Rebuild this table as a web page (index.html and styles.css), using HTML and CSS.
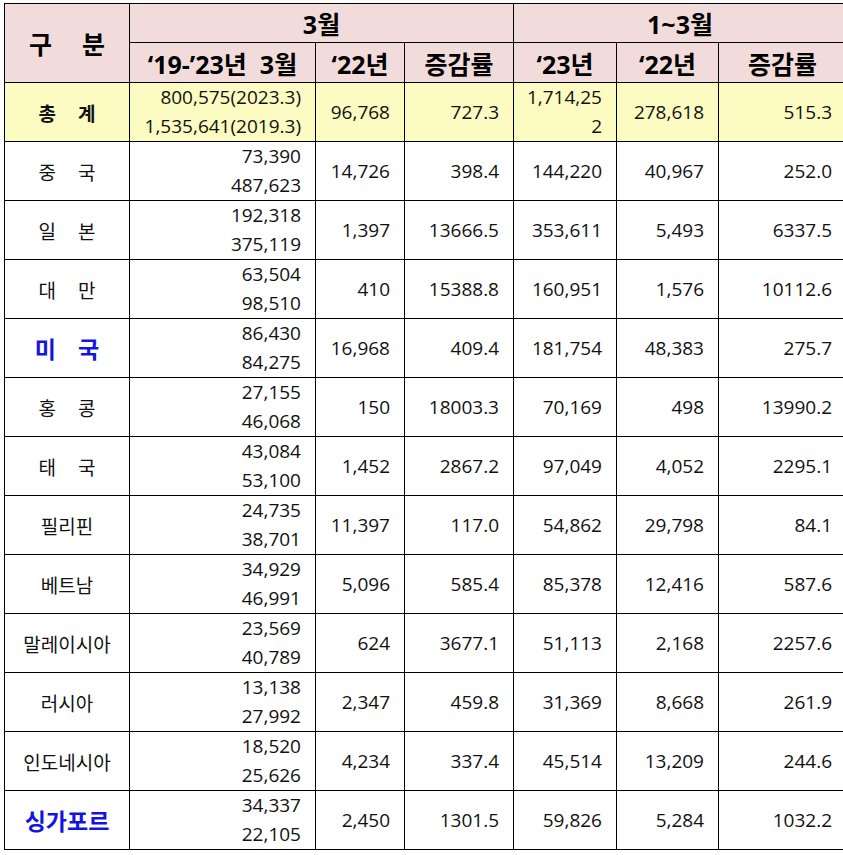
FILE: index.html
```html
<!DOCTYPE html>
<html lang="ko">
<head>
<meta charset="utf-8">
<title>입국 통계</title>
<link rel="stylesheet" href="styles.css">
</head>
<body>
<div class="wrap">
<table class="stats">
  <colgroup>
    <col class="c1"><col class="c2"><col class="c3"><col class="c4"><col class="c5"><col class="c6"><col class="c7">
  </colgroup>
  <thead>
    <tr class="h1">
      <th rowspan="2" class="gubun">구<span class="gsp"></span>분</th>
      <th colspan="3">3월</th>
      <th colspan="3" class="last">1~3월</th>
    </tr>
    <tr class="h2">
      <th>‘19-’23년&nbsp; 3월</th>
      <th>‘22년</th>
      <th>증감률</th>
      <th>‘23년</th>
      <th>‘22년</th>
      <th class="last">증감률</th>
    </tr>
  </thead>
  <tbody>
    <tr class="total">
      <td class="name bold">총<span class="sp"></span>계</td>
      <td class="num two"><div>800,575(2023.3)</div><div>1,535,641(2019.3)</div></td>
      <td class="num mid">96,768</td>
      <td class="num">727.3</td>
      <td class="num two wrapnum"><div class="l">1,714,25</div><div>2</div></td>
      <td class="num mid">278,618</td>
      <td class="num last">515.3</td>
    </tr>
    <tr>
      <td class="name">중<span class="sp"></span>국</td>
      <td class="num two"><div>73,390</div><div>487,623</div></td>
      <td class="num">14,726</td><td class="num">398.4</td><td class="num">144,220</td><td class="num">40,967</td><td class="num last">252.0</td>
    </tr>
    <tr>
      <td class="name">일<span class="sp"></span>본</td>
      <td class="num two"><div>192,318</div><div>375,119</div></td>
      <td class="num">1,397</td><td class="num">13666.5</td><td class="num">353,611</td><td class="num">5,493</td><td class="num last">6337.5</td>
    </tr>
    <tr>
      <td class="name">대<span class="sp"></span>만</td>
      <td class="num two"><div>63,504</div><div>98,510</div></td>
      <td class="num">410</td><td class="num">15388.8</td><td class="num">160,951</td><td class="num">1,576</td><td class="num last">10112.6</td>
    </tr>
    <tr>
      <td class="name blue">미<span class="sp"></span>국</td>
      <td class="num two"><div>86,430</div><div>84,275</div></td>
      <td class="num">16,968</td><td class="num">409.4</td><td class="num">181,754</td><td class="num">48,383</td><td class="num last">275.7</td>
    </tr>
    <tr>
      <td class="name">홍<span class="sp"></span>콩</td>
      <td class="num two"><div>27,155</div><div>46,068</div></td>
      <td class="num">150</td><td class="num">18003.3</td><td class="num">70,169</td><td class="num">498</td><td class="num last">13990.2</td>
    </tr>
    <tr>
      <td class="name">태<span class="sp"></span>국</td>
      <td class="num two"><div>43,084</div><div>53,100</div></td>
      <td class="num">1,452</td><td class="num">2867.2</td><td class="num">97,049</td><td class="num">4,052</td><td class="num last">2295.1</td>
    </tr>
    <tr>
      <td class="name">필리핀</td>
      <td class="num two"><div>24,735</div><div>38,701</div></td>
      <td class="num">11,397</td><td class="num">117.0</td><td class="num">54,862</td><td class="num">29,798</td><td class="num last">84.1</td>
    </tr>
    <tr>
      <td class="name">베트남</td>
      <td class="num two"><div>34,929</div><div>46,991</div></td>
      <td class="num">5,096</td><td class="num">585.4</td><td class="num">85,378</td><td class="num">12,416</td><td class="num last">587.6</td>
    </tr>
    <tr>
      <td class="name">말레이시아</td>
      <td class="num two"><div>23,569</div><div>40,789</div></td>
      <td class="num">624</td><td class="num">3677.1</td><td class="num">51,113</td><td class="num">2,168</td><td class="num last">2257.6</td>
    </tr>
    <tr>
      <td class="name">러시아</td>
      <td class="num two"><div>13,138</div><div>27,992</div></td>
      <td class="num">2,347</td><td class="num">459.8</td><td class="num">31,369</td><td class="num">8,668</td><td class="num last">261.9</td>
    </tr>
    <tr>
      <td class="name">인도네시아</td>
      <td class="num two"><div>18,520</div><div>25,626</div></td>
      <td class="num">4,234</td><td class="num">337.4</td><td class="num">45,514</td><td class="num">13,209</td><td class="num last">244.6</td>
    </tr>
    <tr>
      <td class="name blue">싱가포르</td>
      <td class="num two"><div>34,337</div><div>22,105</div></td>
      <td class="num">2,450</td><td class="num">1301.5</td><td class="num">59,826</td><td class="num">5,284</td><td class="num last">1032.2</td>
    </tr>
  </tbody>
</table>
</div>
</body>
</html>
```
FILE: styles.css
```css
html, body {
  margin: 0;
  padding: 0;
  background: #ffffff;
}
.wrap {
  width: 843px;
  height: 855px;
  overflow: hidden;
  padding: 3px 0 0 4px;
  box-sizing: border-box;
}
.stats {
  border-collapse: collapse;
  table-layout: fixed;
  width: 850px;
  font-family: "Open Sans", "Noto Sans CJK KR", sans-serif;
  font-size: 19px;
  color: #111;
}
.c1 { width: 125px; }
.c2 { width: 186px; }
.c3 { width: 89px; }
.c4 { width: 109px; }
.c5 { width: 103px; }
.c6 { width: 102px; }
.c7 { width: 136px; }

.stats th, .stats td {
  border: 1px solid #000;
  padding: 0;
}
.stats th {
  background: #f2dcdb;
  font-weight: 700;
  font-size: 25px;
  text-align: center;
  color: #000;
}
.stats th.last { padding-right: 8px; }
.h1 th { height: 38px; }
.h2 th { height: 39px; }
.gubun { font-size: 26px; }
.gsp { display: inline-block; width: 30px; }
.sp { display: inline-block; width: 22px; }

.stats tbody tr { height: 59px; }
.stats td { height: 58px; }
.total td { background: #fcfcc2; }

.name {
  text-align: center;
  font-family: "Noto Sans CJK KR", sans-serif;
  font-size: 19px;
}
.bold { font-weight: 700; }
.blue {
  color: #1414e0;
  font-weight: 700;
  font-size: 23px;
}
.num {
  text-align: right;
  padding-right: 14px !important;
}
.num.last { padding-right: 22px !important; }
.two div {
  line-height: 29px;
  height: 29px;
}
```
